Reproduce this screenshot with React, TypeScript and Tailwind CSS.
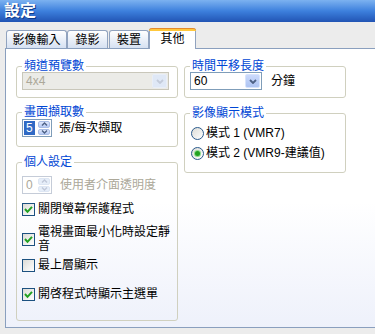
const Chevron = ({ color }: { color: string }) => (
  <svg width="8" height="5" viewBox="0 0 8 5">
    <path d="M1 1 L4 4 L7 1" fill="none" stroke={color} strokeWidth="1.8" />
  </svg>
);

const Combo = ({ value, className, disabled }: { value: string; className: string; disabled?: boolean }) => (
  <div
    className={`flex h-[18px] border ${className} ${
      disabled ? "border-[#c9c7ba] bg-[#ebebe7] text-[#aca899]" : "border-[#7f9db9] bg-white text-black"
    }`}
  >
    <div className="flex flex-1 items-center pl-[3px] leading-[14px]">{value}</div>
    <div
      className={`m-px flex w-[15px] items-center justify-center rounded-[2px] border ${
        disabled ? "border-[#e8eef8] bg-[#dfe8f6]" : "border-[#d8e4fc] bg-linear-to-b from-[#cbdafc] to-[#aec4f2]"
      }`}
    >
      <Chevron color={disabled ? "#c3cbda" : "#4d6185"} />
    </div>
  </div>
);

const Spin = ({ value, disabled }: { value: string; disabled?: boolean }) => (
  <div className={`flex h-[18px] w-[30px] border bg-white ${disabled ? "border-[#c5ccd8]" : "border-[#7f9db9]"}`}>
    <div className="flex flex-1 items-center pl-px">
      {disabled ? (
        <span className="px-[2px] leading-[14px] text-[#aca899]">{value}</span>
      ) : (
        <span className="bg-[#316ac5] px-[2px] leading-[14px] text-white">{value}</span>
      )}
    </div>
    <div className="flex w-[13px] flex-col gap-px py-px pr-px">
      {[0, 1].map((i) => (
        <div
          key={i}
          className={`flex flex-1 items-center justify-center rounded-[2px] border ${
            disabled ? "border-[#dde6f3] bg-[#e6eef9]" : "border-[#a9bde6] bg-linear-to-b from-[#dde7fc] to-[#b6caf4]"
          }`}
        >
          <svg width="7" height="4" viewBox="0 0 7 4">
            <path
              d={i === 0 ? "M1 3.5 L3.5 1 L6 3.5" : "M1 0.5 L3.5 3 L6 0.5"}
              fill="none"
              stroke={disabled ? "#c0c8d8" : "#4d6185"}
              strokeWidth="1.4"
            />
          </svg>
        </div>
      ))}
    </div>
  </div>
);

const Check = ({ on }: { on: boolean }) => (
  <span className="flex h-[13px] w-[13px] shrink-0 items-center justify-center border border-[#1c5180] bg-linear-to-br from-[#dcdcd7] to-white">
    {on && (
      <svg width="9" height="9" viewBox="0 0 9 9">
        <path d="M1 4 L3.5 6.8 L8 1.8" fill="none" stroke="#21a121" strokeWidth="2" />
      </svg>
    )}
  </span>
);

const Radio = ({ on }: { on: boolean }) => (
  <span className="flex h-[13px] w-[13px] shrink-0 items-center justify-center rounded-full border border-[#2a5a8c] bg-linear-to-br from-[#dcdcd7] to-white">
    {on && <span className="h-[5px] w-[5px] rounded-full bg-[#21a121] shadow-[0_0_0_1px_#8fdc8f]" />}
  </span>
);

const Group = ({ title, className, children }: { title: string; className: string; children: React.ReactNode }) => (
  <fieldset className={`w-[162px] rounded-[3px] border border-[#d0d0bf] pl-[5px] ${className}`}>
    <legend className="px-[2px] leading-[12px] text-[#0046d5]">{title}</legend>
    {children}
  </fieldset>
);

const Tab = ({ label, w }: { label: string; w: string }) => (
  <div
    className={`flex h-[18px] ${w} items-center justify-center rounded-t-[3px] border-x border-t border-[#91a3bf] bg-linear-to-b from-white to-[#d6e1f2]`}
  >
    {label}
  </div>
);

export default function App() {
  return (
    <div className="h-[334px] w-[375px] overflow-hidden bg-[#ececec] font-['Liberation_Sans','Noto_Sans_CJK_TC',sans-serif] text-[12px] leading-[14px] text-black">
      <div className="h-[22px] bg-linear-to-b from-[#7cb2f0] via-[#3d80dd] to-[#2254b4] pl-[4px] text-[16px] font-bold leading-[22px] text-white [text-shadow:1px_1px_0_#0f3a8a]">
        設定
      </div>

      <div className="pl-[5px] pt-[6px]">
        <div className="flex h-[20px] items-end pl-px">
          <Tab label="影像輸入" w="w-[61px]" />
          <Tab label="錄影" w="w-[41px]" />
          <div className="w-px" />
          <Tab label="裝置" w="w-[40px]" />
          <div className="relative z-10 -mb-px flex h-[21px] w-[47px] flex-col rounded-t-[3px] border-x border-[#91a3bf] bg-white">
            <div className="-mx-px h-[3px] rounded-t-[3px] border-t border-[#e68b2c] bg-[#ffc83c]" />
            <div className="flex flex-1 items-center justify-center pb-[2px]">其他</div>
          </div>
        </div>

        <div className="h-[280px] border-y border-l border-[#8a9fbe] bg-linear-to-b from-white from-55% to-[#eef1fb] pl-[10px] pt-[11px]">
          <div className="flex gap-[6px]">
            <div className="flex flex-col">
              <Group title="頻道預覽數" className="pb-[7px]">
                <Combo value="4x4" className="w-[147px]" disabled />
              </Group>

              <Group title="畫面擷取數" className="mt-[8px] pb-[9px]">
                <div className="mt-px flex items-center">
                  <Spin value="5" />
                  <span className="ml-[7px]">張/每次擷取</span>
                </div>
              </Group>

              <Group title="個人設定" className="mt-[9px] pb-[19px]">
                <div className="mt-[8px] flex items-center">
                  <Spin value="0" disabled />
                  <span className="ml-[8px] text-[#aca899]">使用者介面透明度</span>
                </div>
                <div className="mt-[8px] flex items-center gap-[3px]">
                  <Check on />
                  <span>關閉螢幕保護程式</span>
                </div>
                <div className="mt-[9px] flex items-center gap-[3px]">
                  <Check on />
                  <span className="w-[134px]">電視畫面最小化時設定靜音</span>
                </div>
                <div className="mt-[5px] flex items-center gap-[3px]">
                  <Check on={false} />
                  <span>最上層顯示</span>
                </div>
                <div className="mt-[15px] flex items-center gap-[3px]">
                  <Check on />
                  <span>開啓程式時顯示主選單</span>
                </div>
              </Group>
            </div>

            <div className="flex flex-col">
              <Group title="時間平移長度" className="pb-[7px]">
                <div className="flex items-center">
                  <Combo value="60" className="w-[72px]" />
                  <span className="ml-[9px]">分鐘</span>
                </div>
              </Group>

              <Group title="影像顯示模式" className="mt-[9px] pb-[12px]">
                <div className="mt-[7px] flex items-center gap-[2px] pl-px">
                  <Radio on={false} />
                  <span>模式 1 (VMR7)</span>
                </div>
                <div className="mt-[6px] flex items-center gap-[2px] pl-px">
                  <Radio on />
                  <span>模式 2 (VMR9-建議值)</span>
                </div>
              </Group>
            </div>
          </div>
        </div>
      </div>
    </div>
  );
}
